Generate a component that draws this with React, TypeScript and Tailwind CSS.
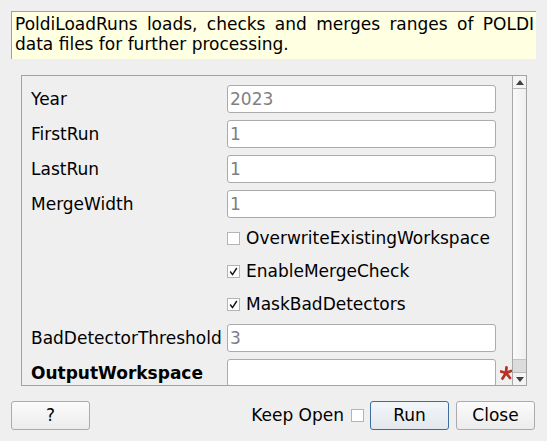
import React from "react";

function TextInput({ value }: { value?: string }) {
  return (
    <div className="h-[28px] w-[269px] border border-[#ababab] rounded-[3px] bg-white pl-[2px] flex items-center text-[#7f7f7f] leading-none">
      {value}
    </div>
  );
}

function Check({ checked }: { checked?: boolean }) {
  return (
    <div className="w-[13px] h-[13px] border border-[#b4b4b4] bg-white flex items-center justify-center shrink-0">
      {checked && (
        <svg width="11" height="11" viewBox="0 0 11 11">
          <path d="M2.2 5.5 L4.5 8.6 L8.8 2" fill="none" stroke="#111" strokeWidth="1.4" />
        </svg>
      )}
    </div>
  );
}

function Asterisk() {
  return (
    <svg width="12" height="14" viewBox="0 0 12 14">
      <g stroke="#b83224" strokeWidth="2.8" strokeLinecap="round">
        <line x1="6" y1="7" x2="6.5" y2="1.5" />
        <line x1="6" y1="7" x2="1" y2="5.5" />
        <line x1="6" y1="7" x2="2.5" y2="12.5" />
        <line x1="6" y1="7" x2="10" y2="12" />
        <line x1="6" y1="7" x2="11" y2="5" />
      </g>
    </svg>
  );
}

function Row({ label, children, bold, h = 28, star }: { label?: string; children: React.ReactNode; bold?: boolean; h?: number; star?: boolean }) {
  return (
    <div className="flex items-center shrink-0" style={{ height: h }}>
      <div className={"w-[196px] shrink-0 leading-none " + (bold ? "font-bold" : "")}>{label}</div>
      <div className="w-[269px] shrink-0 flex items-center">{children}</div>
      <div className="w-[16px] shrink-0 flex justify-end items-center self-stretch">{star && <Asterisk />}</div>
    </div>
  );
}

function Btn({ children, primary, w = 79 }: { children: React.ReactNode; primary?: boolean; w?: number }) {
  return (
    <div
      className={
        "h-[29px] rounded-[3px] border flex items-center justify-center leading-none bg-gradient-to-b " +
        (primary ? "border-[#3b6e9c] from-[#f3f6f9] to-[#e3e8ee]" : "border-[#ababab] from-[#fbfbfb] to-[#ececec]")
      }
      style={{ width: w }}
    >
      {children}
    </div>
  );
}

export default function App() {
  return (
    <div className="w-[547px] h-[441px] bg-[#efefef] overflow-hidden font-['DejaVu_Sans',sans-serif] text-[17px] text-black flex flex-col">
      <div className="mt-[11px] ml-[11px] w-[525px] h-[48px] border-t border-l border-[#a0a0a0] bg-[#ffffe1] pl-[3px] pr-[2px] pt-[2px] leading-[20px] text-justify">
        PoldiLoadRuns loads, checks and merges ranges of POLDI data files for further processing.
      </div>
      <div className="mt-[16px] ml-[21px] w-[506px] h-[311px] border border-[#a3a3a3] flex shrink-0">
        <div className="w-[490px] h-[309px] overflow-hidden pl-[9px] pt-[9px] flex flex-col gap-[7px]">
          <Row label="Year"><TextInput value="2023" /></Row>
          <Row label="FirstRun"><TextInput value="1" /></Row>
          <Row label="LastRun"><TextInput value="1" /></Row>
          <Row label="MergeWidth"><TextInput value="1" /></Row>
          <Row h={26}>
            <div className="flex items-center gap-[6px] leading-none"><Check /><span>OverwriteExistingWorkspace</span></div>
          </Row>
          <Row h={26}>
            <div className="flex items-center gap-[6px] leading-none"><Check checked /><span>EnableMergeCheck</span></div>
          </Row>
          <Row h={26}>
            <div className="flex items-center gap-[6px] leading-none"><Check checked /><span>MaskBadDetectors</span></div>
          </Row>
          <Row label="BadDetectorThreshold"><TextInput value="3" /></Row>
          <Row label="OutputWorkspace" bold star><TextInput /></Row>
        </div>
        <div className="w-[14px] h-[309px] border-l border-[#a8a8a8] flex flex-col">
          <div className="h-[13px] border-b border-[#b8b8b8] bg-[#f4f4f4] flex items-center justify-center">
            <svg width="8" height="5" viewBox="0 0 8 5"><path d="M0 5 L4 0 L8 5 Z" fill="#404040" /></svg>
          </div>
          <div className="h-[271px] bg-gradient-to-r from-[#fafafa] to-[#efefef] border-b border-[#c4c4c4]" />
          <div className="h-[12px] bg-[#dcdcdc]" />
          <div className="h-[13px] border-t border-[#b8b8b8] bg-[#f4f4f4] flex items-center justify-center">
            <svg width="8" height="5" viewBox="0 0 8 5"><path d="M0 0 L8 0 L4 5 Z" fill="#404040" /></svg>
          </div>
        </div>
      </div>
      <div className="mt-[15px] flex items-center pl-[11px] pr-[12px]">
        <Btn>?</Btn>
        <div className="flex-1" />
        <span className="leading-none">Keep Open</span>
        <div className="ml-[7px] w-[13px] h-[13px] border border-[#b4b4b4] bg-white" />
        <div className="ml-[6px]"><Btn primary>Run</Btn></div>
        <div className="ml-[7px]"><Btn>Close</Btn></div>
      </div>
    </div>
  );
}
